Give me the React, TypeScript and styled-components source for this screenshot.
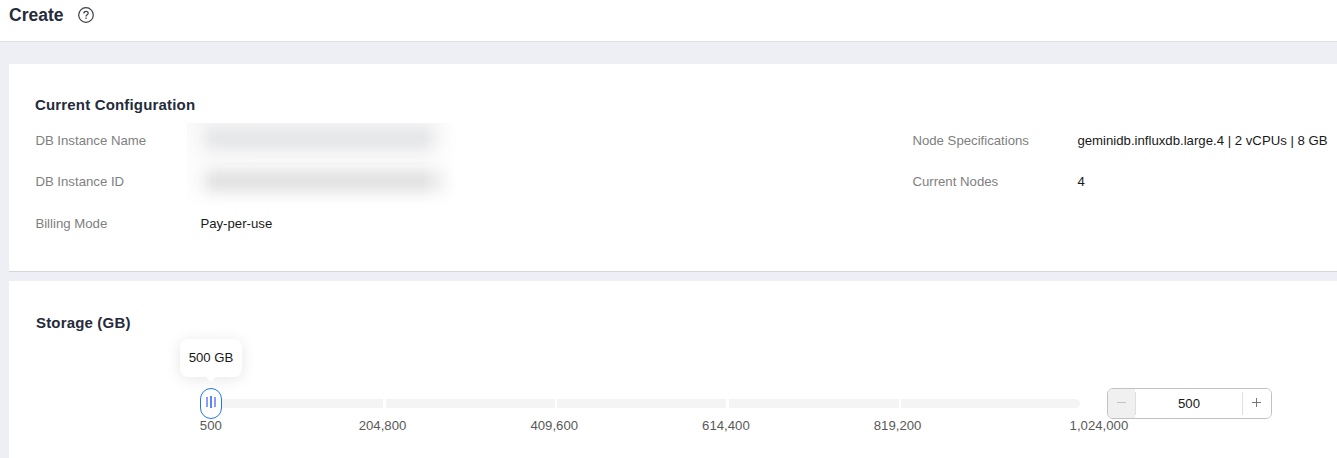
import React from "react";
import styled, { createGlobalStyle } from "styled-components";

const GlobalStyle = createGlobalStyle`
  * { box-sizing: border-box; }
  html, body { margin: 0; height: 100%; overflow: hidden; }
  body { background: #eeeff5; font-family: "Liberation Sans", Arial, sans-serif; font-size: 13.2px; color: #191919; }
  #root { height: 100%; }
`;

const Page = styled.div`
  display: flex;
  flex-direction: column;
  height: 458px;
  overflow: hidden;
`;

const Header = styled.header`
  flex: none;
  display: flex;
  align-items: center;
  height: 42px;
  padding: 0 0 11px 9px;
  gap: 14px;
  background: #fff;
  border-bottom: 1px solid #dfe1e6;
`;

const PageTitle = styled.h1`
  margin: 0;
  font-size: 17.5px;
  line-height: 22px;
  width: 55px;
  white-space: nowrap;
  color: #252b3a;
`;

const Main = styled.main`
  flex: 1;
  display: flex;
  flex-direction: column;
  gap: 9px;
  padding: 22px 0 0 9px;
`;

const Card = styled.section<{ $height: number }>`
  flex: none;
  height: ${(p) => p.$height}px;
  background: #fff;
  border-bottom: 1px solid #d5d7dc;
`;

const CardTitle = styled.h2<{ $top: number; $left: number }>`
  margin: 0;
  padding: ${(p) => p.$top}px 0 0 ${(p) => p.$left}px;
  font-size: 15px;
  line-height: 18px;
  letter-spacing: 0.17px;
  color: #252b3a;
`;

const Details = styled.div`
  display: grid;
  grid-template-columns: 165px 712px 165px 1fr;
  grid-template-rows: 41px 42px 41px;
  padding: 6px 0 0 26.4px;
  line-height: 41px;
  white-space: nowrap;
`;

const Label = styled.span`
  color: #808080;
`;

const Value = styled.span``;

const Redacted = styled.div`
  grid-column: 2;
  grid-row: 1 / 3;
  width: 273px;
  height: 82px;
  margin: 3px 0 0 -13px;
  padding: 8px 0 0 18px;
  overflow: hidden;
  background: linear-gradient(#f5f5f6 0, #fafafa 35px, #fbfbfb 60px, #fefefe 82px);
  mask-image: linear-gradient(90deg, #0008 0, #000 24px, #000 235px, transparent 272px);
`;

const Smudge = styled.div<{ $width: number; $tone: string }>`
  width: ${(p) => p.$width}px;
  height: 16px;
  margin-bottom: 26px;
  background: ${(p) => p.$tone};
  filter: blur(8px);
`;

const SliderRow = styled.div`
  display: flex;
  align-items: center;
  height: 31px;
  margin: 56px 0 0 191px;
`;

const Slider = styled.div`
  position: relative;
  display: flex;
  align-items: center;
  width: 880px;
  height: 31px;
  padding-left: 11px;
`;

const Track = styled.div`
  display: grid;
  grid-template-columns: 172px 169px 169px 170px 1fr;
  column-gap: 2.5px;
  width: 869px;
  height: 9px;
  border-radius: 5px;
  overflow: hidden;
`;

const Segment = styled.div`
  background: #f4f4f4;
`;

const Handle = styled.div`
  position: absolute;
  left: 0;
  top: 0;
  display: flex;
  justify-content: center;
  gap: 2px;
  width: 22px;
  height: 31px;
  padding-top: 8px;
  border: 1px solid #2676ee;
  border-radius: 11px;
  background: #fff;
`;

const Grip = styled.i<{ $tall?: boolean }>`
  width: 2px;
  height: ${(p) => (p.$tall ? 12 : 10)}px;
  margin-top: ${(p) => (p.$tall ? -1 : 0)}px;
  background: ${(p) => (p.$tall ? "#5b84ff" : "#8c9bff")};
`;

const Tooltip = styled.div`
  position: absolute;
  left: -20px;
  top: -49px;
  width: 62px;
  height: 38px;
  border-radius: 8px;
  background: #fff;
  box-shadow: 0 2px 15px rgba(0, 0, 0, 0.1);
  line-height: 37px;
  text-align: center;
  white-space: nowrap;
  &::after {
    content: "";
    position: absolute;
    left: 26px;
    top: 38px;
    border: 5px solid transparent;
    border-top-color: #fff;
    border-bottom: 0;
  }
`;

const Stepper = styled.div`
  display: flex;
  width: 165px;
  height: 31px;
  margin-left: 27px;
  border: 1px solid #c2c2c2;
  border-radius: 6px;
  overflow: hidden;
`;

const StepButton = styled.button<{ $muted?: boolean }>`
  display: flex;
  align-items: center;
  justify-content: center;
  width: ${(p) => (p.$muted ? 27 : 28)}px;
  padding: 0 ${(p) => (p.$muted ? 0 : 1)}px 2px 0;
  border: 0;
  background: ${(p) => (p.$muted ? "#f0f0f0" : "#fff")};
  color: ${(p) => (p.$muted ? "#c2c2c2" : "#777")};
`;

const Amount = styled.span`
  flex: 1;
  margin: 3px 0;
  border-left: 1px solid #dfdfdf;
  border-right: 1px solid #dfdfdf;
  line-height: 24px;
  text-align: center;
`;

const Scale = styled.div`
  display: grid;
  grid-template-columns: repeat(5, 171.7px) 231px;
  margin-left: 116px;
  line-height: 14px;
  text-align: center;
  color: #595959;
`;

const HelpIcon = () => (
  <svg width="16" height="16" viewBox="0 0 16 16" fill="none" stroke="#3c3f46" strokeWidth="1.2">
    <circle cx="8" cy="8" r="7.3" />
    <path d="M5.8 6.4C5.8 3.7 10.2 3.7 10.2 6.2C10.2 7.7 8 7.7 8 9.4" />
    <path d="M8 10.6V11.9" />
  </svg>
);

const StepIcon = ({ plus }: { plus?: boolean }) => (
  <svg width="9" height="9" viewBox="0 0 9 9" stroke="currentColor" shapeRendering="crispEdges">
    <path d={plus ? "M0 4.5H9M4.5 0V9" : "M0 4.5H9"} />
  </svg>
);

const marks = ["500", "204,800", "409,600", "614,400", "819,200", "1,024,000"];

export default function App() {
  return (
    <Page>
      <GlobalStyle />
      <Header>
        <PageTitle>Create</PageTitle>
        <HelpIcon />
      </Header>
      <Main>
        <Card $height={208}>
          <CardTitle $top={32} $left={26}>Current Configuration</CardTitle>
          <Details>
            <Label>DB Instance Name</Label>
            <Redacted>
              <Smudge $width={234} $tone="#dfe0e3" />
              <Smudge $width={246} $tone="#d9d9d9" />
            </Redacted>
            <Label>Node Specifications</Label>
            <Value>geminidb.influxdb.large.4 | 2 vCPUs | 8 GB</Value>
            <Label>DB Instance ID</Label>
            <Label>Current Nodes</Label>
            <Value>4</Value>
            <Label>Billing Mode</Label>
            <Value>Pay-per-use</Value>
          </Details>
        </Card>
        <Card $height={190}>
          <CardTitle $top={33} $left={27}>Storage (GB)</CardTitle>
          <SliderRow>
            <Slider>
              <Track>
                {marks.slice(1).map((m) => <Segment key={m} />)}
              </Track>
              <Handle><Grip /><Grip $tall /><Grip /></Handle>
              <Tooltip>500 GB</Tooltip>
            </Slider>
            <Stepper>
              <StepButton $muted aria-label="Decrease"><StepIcon /></StepButton>
              <Amount>500</Amount>
              <StepButton aria-label="Increase"><StepIcon plus /></StepButton>
            </Stepper>
          </SliderRow>
          <Scale>
            {marks.map((m) => <span key={m}>{m}</span>)}
          </Scale>
        </Card>
      </Main>
    </Page>
  );
}
